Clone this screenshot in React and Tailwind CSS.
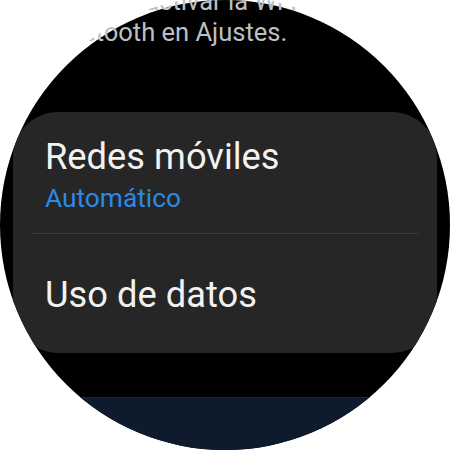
import React from 'react';

const font = { fontFamily: 'Roboto, "Noto Sans", sans-serif' };

function NoticeText() {
  // the notice text scrolled mostly off the top of the watch face
  return (
    <div className="absolute inset-0 [clip-path:circle(229px_at_225px_225px)] pointer-events-none">
      <div className="mt-[-14px] pl-[46px] pr-[40px] text-[25.5px] leading-[30.5px] text-[#bcc0c4]">
        <p className="whitespace-nowrap">Para desactivar la Wi-Fi y</p>
        <p className="whitespace-nowrap">Bluetooth en Ajustes.</p>
      </div>
    </div>
  );
}

function SettingsCard() {
  return (
    <div className="mx-[13px] h-[241px] shrink-0 rounded-[45px] bg-[#262626] flex flex-col">
      <div className="pt-[24px] pl-[32px] pb-[20px]">
        <p className="text-[36.3px] leading-[42px] text-[#f2f2f2]">Redes móviles</p>
        <p className="mt-[5px] text-[26.3px] leading-[30px] text-[#2b8ae6]">Automático</p>
      </div>
      <div className="mx-[18px] h-px bg-[#3a3a3a]" />
      <div className="pt-[40px] pl-[32px]">
        <p className="text-[36.3px] leading-[42px] text-[#f2f2f2]">Uso de datos</p>
      </div>
    </div>
  );
}

export default function App() {
  return (
    <div className="relative w-[450px] h-[450px] bg-white overflow-hidden" style={font}>
      <div className="w-[450px] h-[450px] rounded-full bg-black overflow-hidden flex flex-col">
        <div className="h-[112px] shrink-0" />
        <SettingsCard />
        <div className="h-[44px] shrink-0" />
        <div className="flex-1 bg-[#0e1b2d] border-t border-[#17263a]" />
      </div>
      <NoticeText />
    </div>
  );
}
